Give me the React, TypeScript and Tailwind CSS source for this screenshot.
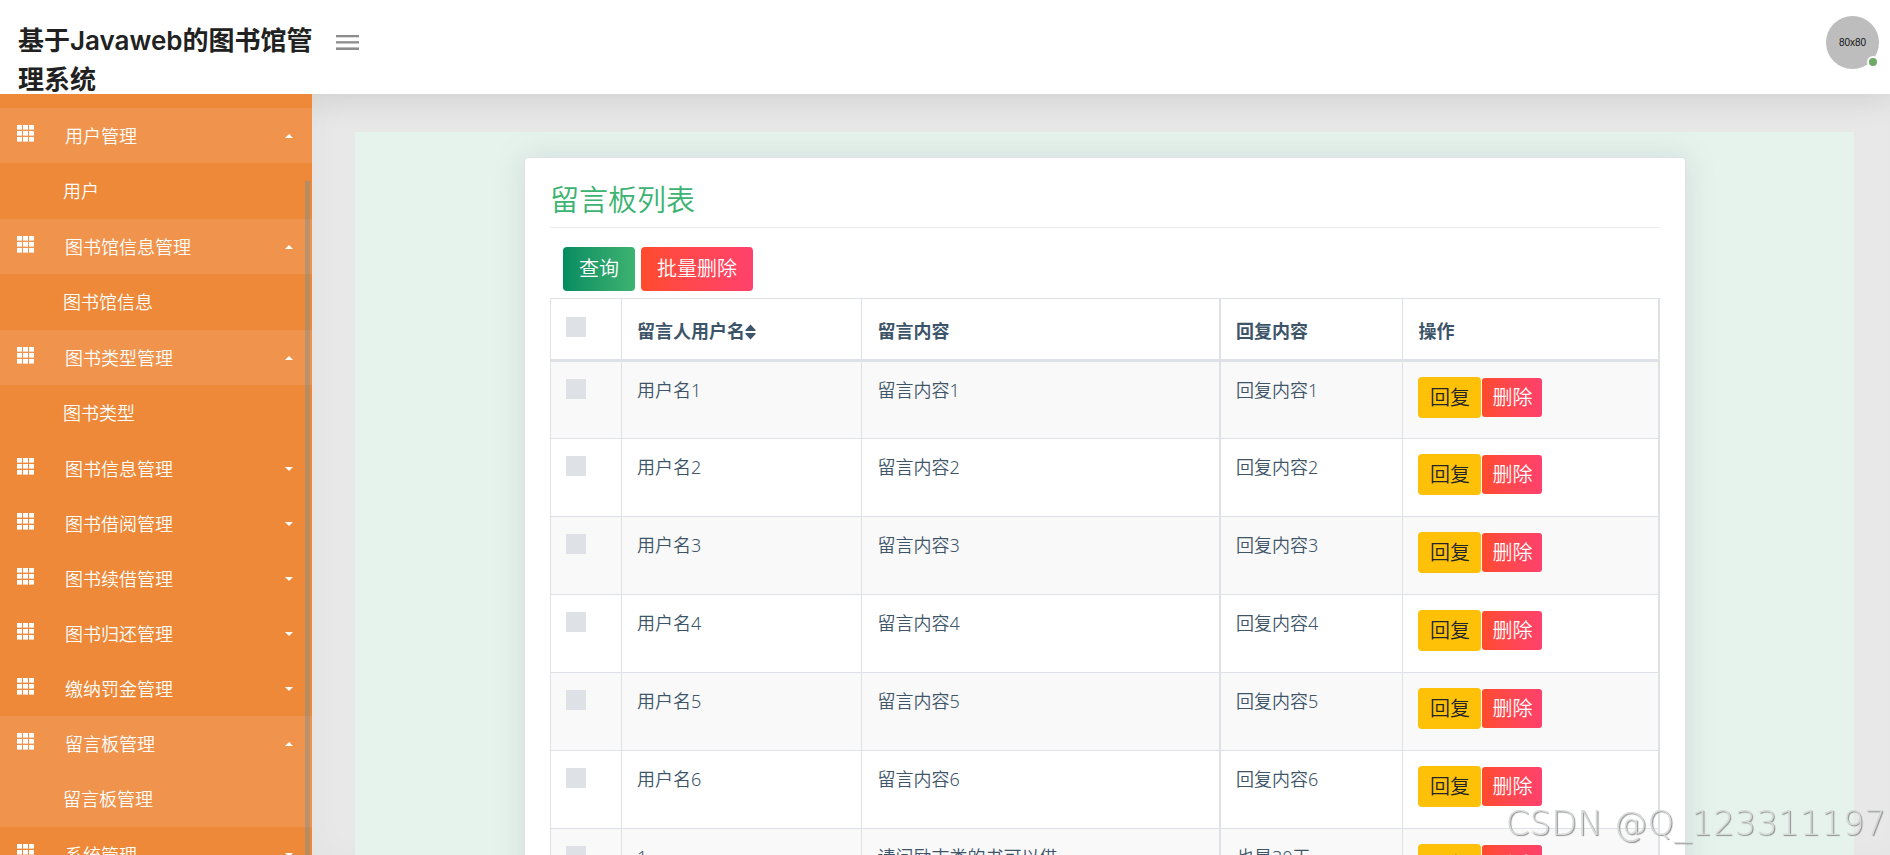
import { useState } from 'react'

type MenuGroup = {
  title: string
  items: string[]
}

const menu: MenuGroup[] = [
  { title: '用户管理', items: ['用户'] },
  { title: '图书馆信息管理', items: ['图书馆信息'] },
  { title: '图书类型管理', items: ['图书类型'] },
  { title: '图书信息管理', items: ['图书信息'] },
  { title: '图书借阅管理', items: ['图书借阅'] },
  { title: '图书续借管理', items: ['图书续借'] },
  { title: '图书归还管理', items: ['图书归还'] },
  { title: '缴纳罚金管理', items: ['缴纳罚金'] },
  { title: '留言板管理', items: ['留言板管理'] },
  { title: '系统管理', items: ['轮播图管理'] },
]

const activeItem = '留言板管理'

const messages = [
  { id: 1, user: '用户名1', content: '留言内容1', reply: '回复内容1' },
  { id: 2, user: '用户名2', content: '留言内容2', reply: '回复内容2' },
  { id: 3, user: '用户名3', content: '留言内容3', reply: '回复内容3' },
  { id: 4, user: '用户名4', content: '留言内容4', reply: '回复内容4' },
  { id: 5, user: '用户名5', content: '留言内容5', reply: '回复内容5' },
  { id: 6, user: '用户名6', content: '留言内容6', reply: '回复内容6' },
  { id: 7, user: '1', content: '请问励志类的书可以借', reply: '也是30天' },
]

const checkboxClass =
  'mt-[2px] block h-5 w-5 cursor-pointer appearance-none bg-[#dee2e6] checked:bg-[#3cb371]'

function GridIcon() {
  return (
    <svg width="17" height="17" viewBox="0 0 17 17" fill="#fff" className="shrink-0">
      {[0, 6, 12].map((y) => [0, 6, 12].map((x) => <rect key={`${x}-${y}`} x={x} y={y} width="5" height="4.6" />))}
    </svg>
  )
}

function Caret({ up }: { up: boolean }) {
  return (
    <svg width="8" height="4" viewBox="0 0 8 4" fill="#fff">
      <path d={up ? 'M0 4 L4 0 L8 4 Z' : 'M0 0 L4 4 L8 0 Z'} />
    </svg>
  )
}

function SortIcon() {
  return (
    <svg width="11" height="16" viewBox="0 0 11 16" fill="#3e5569" className="inline-block align-[-2px]">
      <path d="M5.5 0.5 L10.6 6 Q10.8 7 10 7 H1 Q0.2 7 0.4 6 Z" />
      <path d="M5.5 15.5 L10.6 10 Q10.8 9 10 9 H1 Q0.2 9 0.4 10 Z" />
    </svg>
  )
}

export default function App() {
  const [opened, setOpened] = useState<string[]>(['用户管理', '图书馆信息管理', '图书类型管理', '留言板管理'])
  const [selected, setSelected] = useState<number[]>([])

  const toggleMenu = (title: string) => {
    setOpened((prev) => (prev.includes(title) ? prev.filter((t) => t !== title) : [...prev, title]))
  }

  const toggleRow = (id: number) => {
    setSelected((prev) => (prev.includes(id) ? prev.filter((n) => n !== id) : [...prev, id]))
  }

  const toggleAll = () => {
    setSelected(selected.length === messages.length ? [] : messages.map((m) => m.id))
  }

  return (
    <div className="flex h-screen flex-col overflow-hidden bg-[#e8e8e8] font-['Noto_Sans','Noto_Sans_CJK_SC',sans-serif] font-[350]">
      {/* Header */}
      <header className="z-10 flex h-[94px] shrink-0 bg-white shadow-[0_5px_35px_rgba(0,0,0,0.1)]">
        <div className="w-[312px] shrink-0 overflow-hidden pt-[21px] pl-[18px]">
          <h1 className="w-[304px] font-['Inter','Noto_Sans_CJK_SC',sans-serif] text-[26px] leading-[39px] font-semibold text-[#212121]">
            基于Javaweb的图书馆管理系统
          </h1>
        </div>
        <button type="button" aria-label="menu" className="ml-6 h-[84px] cursor-pointer">
          <svg width="23" height="15" viewBox="0 0 23 15" fill="#8c8c8c">
            <rect width="23" height="2.3" />
            <rect y="6.2" width="23" height="2.3" />
            <rect y="12.4" width="23" height="2.6" />
          </svg>
        </button>
        <div className="relative mt-4 mr-[11px] ml-auto h-[53px] w-[53px]">
          <div className="flex h-full items-center justify-center rounded-full bg-[#bdbdbd] font-['Liberation_Sans',sans-serif] text-[10px] font-normal text-[#111]">
            80x80
          </div>
          <span className="absolute right-0 bottom-px h-3 w-3 rounded-full border-2 border-white bg-[#6fa966]" />
        </div>
      </header>

      <div className="flex min-h-0 flex-1">
        {/* Sidebar */}
        <aside className="relative z-20 w-[312px] shrink-0 overflow-hidden bg-[#ed8938] pt-[14px] text-lg text-white">
          <nav>
            {menu.map((group) => {
              const isOpen = opened.includes(group.title)
              return (
                <div key={group.title}>
                  <button
                    type="button"
                    onClick={() => toggleMenu(group.title)}
                    className={`flex h-[55px] w-full cursor-pointer items-center pr-[19px] pl-[17px] text-left ${
                      isOpen ? 'bg-[#f0944d]' : ''
                    }`}
                  >
                    <span className="mb-1">
                      <GridIcon />
                    </span>
                    <span className="ml-[31px] flex-1">{group.title}</span>
                    <Caret up={isOpen} />
                  </button>
                  {isOpen &&
                    group.items.map((item) => (
                      <a
                        key={item}
                        href="#"
                        className={`flex h-14 items-center pl-[63px] ${item === activeItem ? 'bg-[#f0944d]' : ''}`}
                      >
                        {item}
                      </a>
                    ))}
                </div>
              )
            })}
          </nav>
          <div className="absolute top-[87px] right-[2px] bottom-0 w-[5px] bg-[#6b8e9f]/40" />
        </aside>

        {/* Content */}
        <main className="min-w-0 flex-1 pt-[38px] pr-9 pl-[43px] shadow-[inset_10px_0_30px_rgba(0,0,0,0.02)]">
          <div className="min-h-full bg-[#e6f3ec] pt-[25px] pr-42 pl-[169px]">
            <section className="rounded border border-[#dee2e6] bg-white px-[25px] pt-[21px] pb-6 text-[#3e5569] shadow-[0_0_30px_rgba(115,128,157,0.2)]">
              <h2 className="border-b border-[#e9ecef] pb-[6px] text-[29px] leading-[42px] text-[#3cb371]">留言板列表</h2>

              <div className="mt-[19px] mb-[7px] flex gap-[6px] pl-[13px] text-xl text-white">
                <button
                  type="button"
                  className="h-11 cursor-pointer rounded bg-linear-to-r from-[#028c61] to-[#3cb371] px-4"
                >
                  查询
                </button>
                <button
                  type="button"
                  className="h-11 cursor-pointer rounded bg-linear-to-r from-[#ff4b2b] to-[#ff416c] px-4"
                >
                  批量删除
                </button>
              </div>

              <table className="w-full table-fixed border-collapse border border-r-2 border-[#dee2e6] text-lg leading-[26px]">
                <thead>
                  <tr className="h-[62px] border-b-3 border-[#dee2e6] text-left align-bottom font-bold">
                    <th className="w-[6.4%] px-[15px] pt-4 align-top">
                      <input
                        type="checkbox"
                        aria-label="全选"
                        checked={selected.length === messages.length}
                        onChange={toggleAll}
                        className={checkboxClass}
                      />
                    </th>
                    <th className="w-[21.7%] border-l border-[#dee2e6] px-[15px] pb-[15px]">
                      留言人用户名
                      <SortIcon />
                    </th>
                    <th className="w-[32.3%] border-l border-[#dee2e6] px-[15px] pb-[15px]">留言内容</th>
                    <th className="w-[16.5%] border-l-2 border-[#dee2e6] px-[15px] pb-[15px]">回复内容</th>
                    <th className="border-l border-[#dee2e6] px-[15px] pb-[15px]">操作</th>
                  </tr>
                </thead>
                <tbody>
                  {messages.map((m) => (
                    <tr key={m.id} className="h-[78px] border-b border-[#dee2e6] align-top odd:bg-[#f9f9f9]">
                      <td className="px-[15px] pt-[15px]">
                        <input
                          type="checkbox"
                          aria-label={m.user}
                          checked={selected.includes(m.id)}
                          onChange={() => toggleRow(m.id)}
                          className={checkboxClass}
                        />
                      </td>
                      <td className="border-l border-[#dee2e6] px-[15px] pt-[15px]">{m.user}</td>
                      <td className="border-l border-[#dee2e6] px-[15px] pt-[15px]">{m.content}</td>
                      <td className="border-l-2 border-[#dee2e6] px-[15px] pt-[15px]">{m.reply}</td>
                      <td className="border-l border-[#dee2e6] px-[15px] pt-[15px]">
                        <div className="flex items-center gap-px text-xl">
                          <button
                            type="button"
                            className="h-[41px] w-[63px] cursor-pointer rounded bg-[#ffc107] text-[#212529]"
                          >
                            回复
                          </button>
                          <button
                            type="button"
                            className="h-[39px] w-[60px] cursor-pointer rounded-[3px] bg-linear-to-r from-[#ff4b2b] to-[#ff416c] text-white"
                          >
                            删除
                          </button>
                        </div>
                      </td>
                    </tr>
                  ))}
                </tbody>
              </table>
            </section>
          </div>
        </main>
      </div>

      {/* Watermark */}
      <div className="pointer-events-none fixed right-1 bottom-3 z-30 font-['DejaVu_Sans',sans-serif] text-[34px] leading-10 font-extralight text-[#d6dad8] [text-shadow:1px_1px_1px_#8c8c8c]">
        CSDN @Q_123311197
      </div>
    </div>
  )
}
